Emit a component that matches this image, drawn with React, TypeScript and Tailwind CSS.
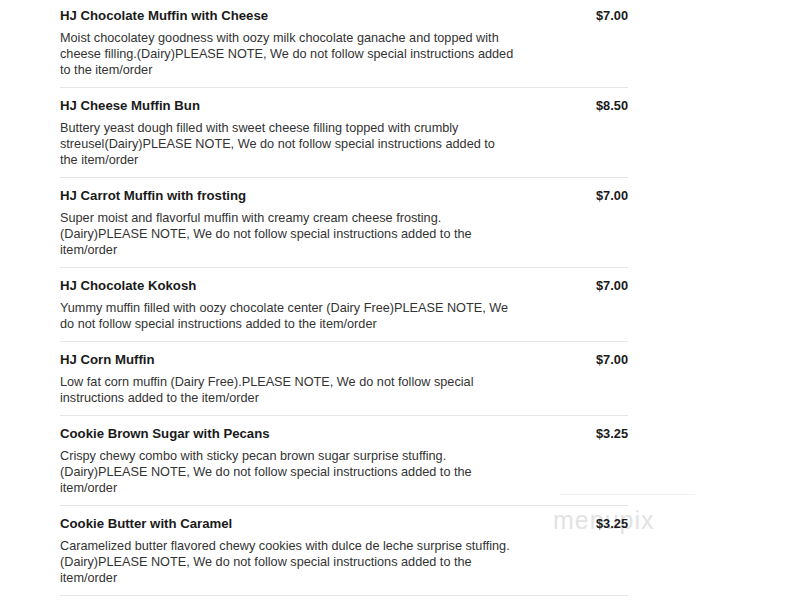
import React from 'react'

type Item = {
  name: string
  desc: string
  price: string
}

const items: Item[] = [
  {
    name: 'HJ Chocolate Muffin with Cheese',
    desc: 'Moist chocolatey goodness with oozy milk chocolate ganache and topped with cheese filling.(Dairy)PLEASE NOTE, We do not follow special instructions added to the item/order',
    price: '$7.00',
  },
  {
    name: 'HJ Cheese Muffin Bun',
    desc: 'Buttery yeast dough filled with sweet cheese filling topped with crumbly streusel(Dairy)PLEASE NOTE, We do not follow special instructions added to the item/order',
    price: '$8.50',
  },
  {
    name: 'HJ Carrot Muffin with frosting',
    desc: 'Super moist and flavorful muffin with creamy cream cheese frosting. (Dairy)PLEASE NOTE, We do not follow special instructions added to the item/order',
    price: '$7.00',
  },
  {
    name: 'HJ Chocolate Kokosh',
    desc: 'Yummy muffin filled with oozy chocolate center (Dairy Free)PLEASE NOTE, We do not follow special instructions added to the item/order',
    price: '$7.00',
  },
  {
    name: 'HJ Corn Muffin',
    desc: 'Low fat corn muffin (Dairy Free).PLEASE NOTE, We do not follow special instructions added to the item/order',
    price: '$7.00',
  },
  {
    name: 'Cookie Brown Sugar with Pecans',
    desc: 'Crispy chewy combo with sticky pecan brown sugar surprise stuffing. (Dairy)PLEASE NOTE, We do not follow special instructions added to the item/order',
    price: '$3.25',
  },
  {
    name: 'Cookie Butter with Caramel',
    desc: 'Caramelized butter flavored chewy cookies with dulce de leche surprise stuffing. (Dairy)PLEASE NOTE, We do not follow special instructions added to the item/order',
    price: '$3.25',
  },
]

function MenuRow({ item, first }: { item: Item; first: boolean }) {
  return (
    <div className={`flex justify-between border-b border-[#e6e6e6] pb-[9px] ${first ? 'pt-[8px]' : 'pt-[10px]'}`}>
      <div className="w-[456px]">
        <div className="text-[13.2px] font-bold leading-4 text-[#1a1a1a]">{item.name}</div>
        <p className="mt-[6px] text-[12.7px] leading-4 text-[#333]">{item.desc}</p>
      </div>
      <div className="text-[12.8px] font-bold leading-4 text-[#1a1a1a]">{item.price}</div>
    </div>
  )
}

export default function App() {
  return (
    <div className="relative min-h-[603px] bg-white font-['Liberation_Sans',Arial,sans-serif]">
      {/* menupix watermark, sits behind the list */}
      <div className="pointer-events-none absolute left-[560px] top-[494px] h-px w-[135px] bg-[#f2f2f2]" />
      <div className="pointer-events-none absolute left-[553px] top-[506px] text-[25px] leading-7 tracking-[1px] text-[#e3e3e3]">
        menupix
      </div>

      <div className="relative ml-[60px] w-[568px]">
        {items.map((item, i) => (
          <MenuRow key={item.name} item={item} first={i === 0} />
        ))}
      </div>
    </div>
  )
}
